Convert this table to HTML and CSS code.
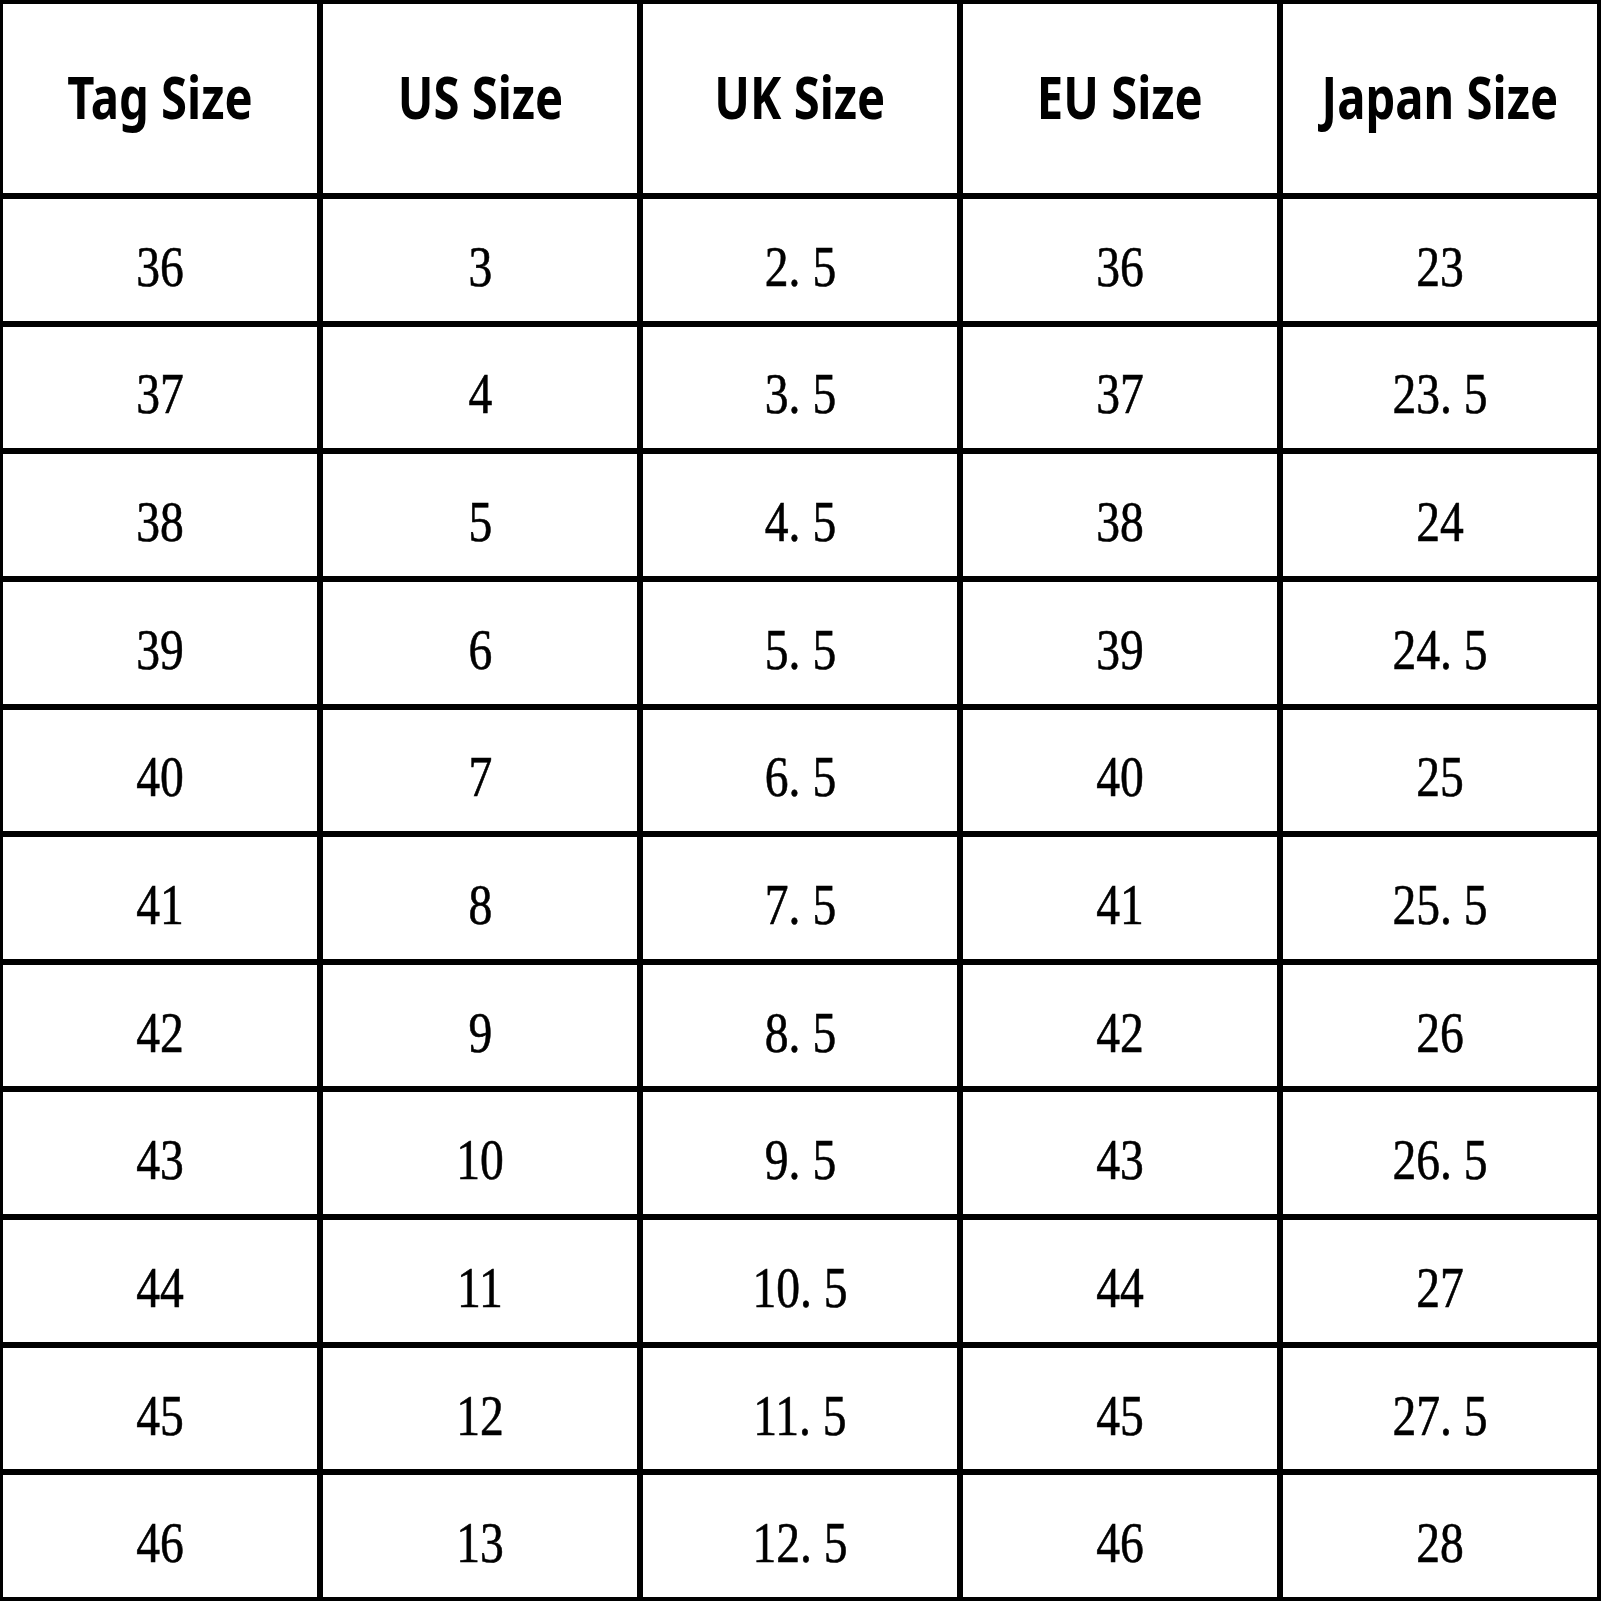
FILE: index.html
```html
<!DOCTYPE html>
<html>
<head>
<meta charset="utf-8">
<link rel="stylesheet" href="styles.css">
</head>
<body>
<div class="chart">
  <div class="cell head"><span>Tag Size</span></div>
  <div class="cell head"><span>US Size</span></div>
  <div class="cell head"><span>UK Size</span></div>
  <div class="cell head"><span>EU Size</span></div>
  <div class="cell head"><span>Japan Size</span></div>

  <div class="cell"><span>36</span></div><div class="cell"><span>3</span></div><div class="cell"><span>2. 5</span></div><div class="cell"><span>36</span></div><div class="cell"><span>23</span></div>
  <div class="cell"><span>37</span></div><div class="cell"><span>4</span></div><div class="cell"><span>3. 5</span></div><div class="cell"><span>37</span></div><div class="cell"><span>23. 5</span></div>
  <div class="cell"><span>38</span></div><div class="cell"><span>5</span></div><div class="cell"><span>4. 5</span></div><div class="cell"><span>38</span></div><div class="cell"><span>24</span></div>
  <div class="cell"><span>39</span></div><div class="cell"><span>6</span></div><div class="cell"><span>5. 5</span></div><div class="cell"><span>39</span></div><div class="cell"><span>24. 5</span></div>
  <div class="cell"><span>40</span></div><div class="cell"><span>7</span></div><div class="cell"><span>6. 5</span></div><div class="cell"><span>40</span></div><div class="cell"><span>25</span></div>
  <div class="cell"><span>41</span></div><div class="cell"><span>8</span></div><div class="cell"><span>7. 5</span></div><div class="cell"><span>41</span></div><div class="cell"><span>25. 5</span></div>
  <div class="cell"><span>42</span></div><div class="cell"><span>9</span></div><div class="cell"><span>8. 5</span></div><div class="cell"><span>42</span></div><div class="cell"><span>26</span></div>
  <div class="cell"><span>43</span></div><div class="cell"><span>10</span></div><div class="cell"><span>9. 5</span></div><div class="cell"><span>43</span></div><div class="cell"><span>26. 5</span></div>
  <div class="cell"><span>44</span></div><div class="cell"><span>11</span></div><div class="cell"><span>10. 5</span></div><div class="cell"><span>44</span></div><div class="cell"><span>27</span></div>
  <div class="cell"><span>45</span></div><div class="cell"><span>12</span></div><div class="cell"><span>11. 5</span></div><div class="cell"><span>45</span></div><div class="cell"><span>27. 5</span></div>
  <div class="cell"><span>46</span></div><div class="cell"><span>13</span></div><div class="cell"><span>12. 5</span></div><div class="cell"><span>46</span></div><div class="cell"><span>28</span></div>
</div>
</body>
</html>
```

FILE: styles.css
```css
html, body {
  margin: 0;
  padding: 0;
  background: #fff;
}

.chart {
  box-sizing: border-box;
  width: 1601px;
  height: 1601px;
  padding: 4px 4px 4px 3px;
  background: #000;
  display: grid;
  grid-template-columns: repeat(5, 1fr);
  grid-template-rows: 189px repeat(11, 1fr);
  gap: 6px;
}

.cell {
  background: #fff;
  display: flex;
  align-items: center;
  justify-content: center;
  color: #000;
  font-family: "Liberation Serif", "DejaVu Serif", serif;
  font-size: 58px;
  line-height: 1;
  padding-top: 14px;
  box-sizing: border-box;
}

.cell span {
  display: inline-block;
  transform: scaleX(0.82);
  white-space: pre;
  -webkit-text-stroke: 0.6px #000;
}

.cell.head {
  font-family: "Noto Sans", "Open Sans", sans-serif;
  font-weight: 700;
  font-size: 59px;
  padding-top: 0;
  padding-bottom: 4px;
}

.cell.head span {
  transform: scaleX(0.8);
  -webkit-text-stroke: 0;
}
```
